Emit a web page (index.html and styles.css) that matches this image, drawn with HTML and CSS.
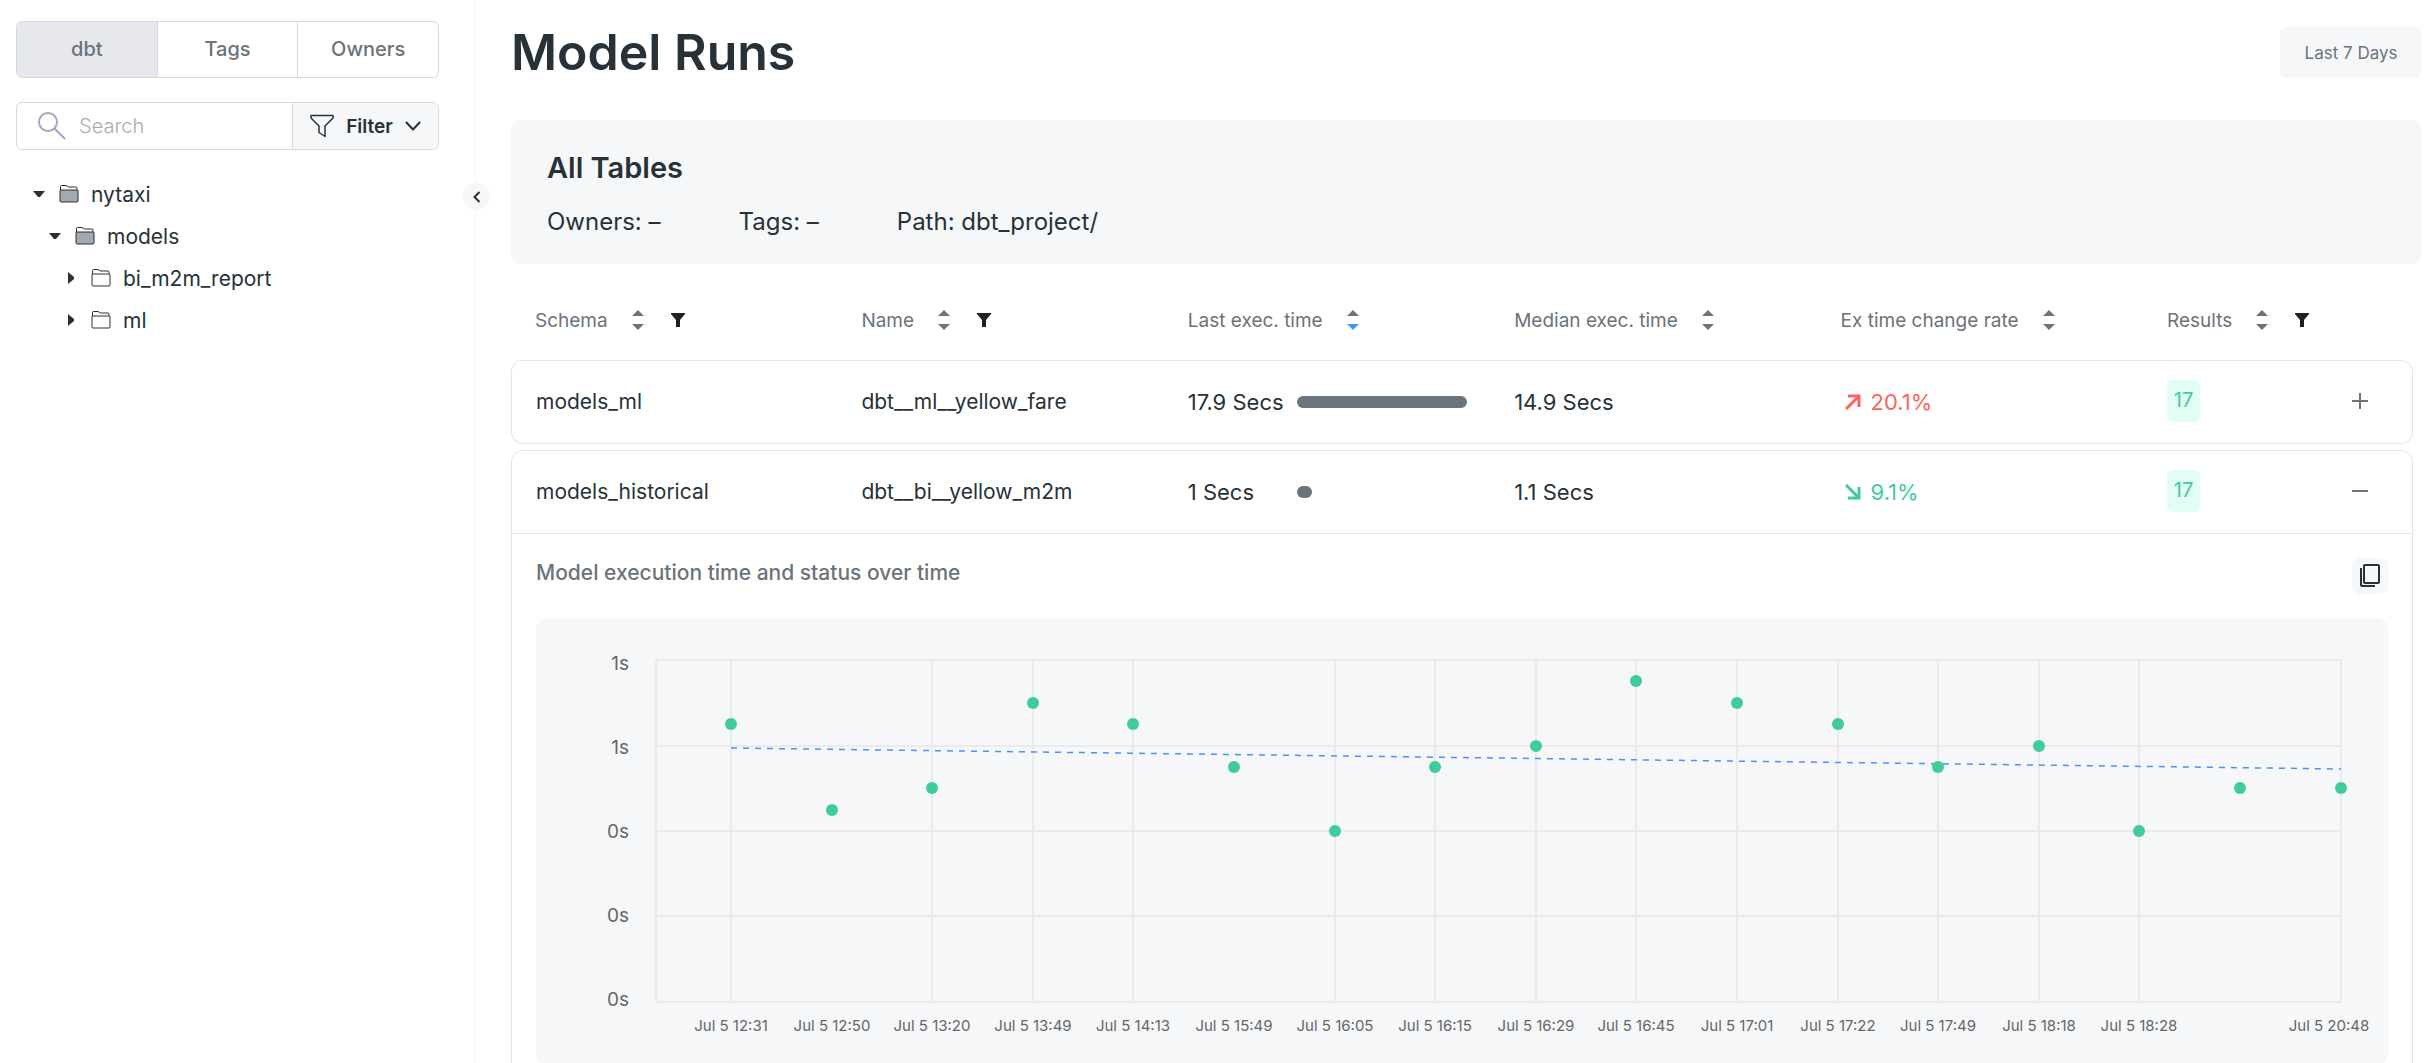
FILE: index.html
```html
<!DOCTYPE html>
<html lang="en">
<head>
<meta charset="utf-8">
<meta name="viewport" content="width=device-width, initial-scale=1">
<title>Model Runs</title>
<link rel="stylesheet" href="styles.css">
</head>
<body>
<svg class="sprite" aria-hidden="true">
  <symbol id="sort-up" viewBox="0 0 12 6"><path d="M6 0 12 6H0Z"/></symbol>
  <symbol id="sort-down" viewBox="0 0 12 6"><path d="M0 0H12L6 6Z"/></symbol>
  <symbol id="funnel" viewBox="0 0 14 14"><path d="M0 0H14V1L9 7V14H5V7L0 1Z"/></symbol>
  <symbol id="folder" viewBox="0 0 20 20"><path class="folder-tab" d="M1.500 7V2.500Q1.500 1.500 2.500 1.500H7L9.500 3H17Q18 3 18 4V6"/><rect class="folder-body" x="1" y="6" width="18" height="12" rx="1"/></symbol>
  <symbol id="caret-down" viewBox="0 0 12 12"><path d="M0 3H12L7 9H5Z"/></symbol>
  <symbol id="caret-right" viewBox="0 0 12 12"><path d="M3 0 9 5V7L3 12Z"/></symbol>
  <symbol id="arrow" viewBox="0 0 16 16"><path d="M1 15 14 2M3 2H14V13" fill="none" stroke="currentColor" stroke-width="3"/></symbol>
</svg>
<div class="app">
  <aside class="sidebar">
    <div class="tabs">
      <button class="tab active" type="button">dbt</button>
      <button class="tab" type="button">Tags</button>
      <button class="tab" type="button">Owners</button>
    </div>
    <div class="search">
      <label class="search-box">
        <svg class="search-icon" viewBox="0 0 28 28" aria-hidden="true"><circle cx="10" cy="10" r="9"/><path d="M16.500 16.500 27 27"/></svg>
        <input type="search" placeholder="Search" aria-label="Search">
      </label>
      <button class="filter" type="button">
        <svg class="filter-icon" viewBox="0 0 24 24" aria-hidden="true"><path d="M1 1.500H23V4L15 12V22.500L9 18.500V12L1 4Z"/></svg>
        Filter
        <svg class="chevron" viewBox="0 0 16 10" aria-hidden="true"><path d="M1 1 8 8.500 15 1"/></svg>
      </button>
    </div>
    <ul class="tree">
      <li><a class="node" href="#nytaxi"><svg class="caret"><use href="#caret-down"/></svg><svg class="folder open"><use href="#folder"/></svg>nytaxi</a>
        <ul>
          <li><a class="node" href="#models"><svg class="caret"><use href="#caret-down"/></svg><svg class="folder open"><use href="#folder"/></svg>models</a>
            <ul>
              <li><a class="node" href="#report"><svg class="caret"><use href="#caret-right"/></svg><svg class="folder"><use href="#folder"/></svg>bi_m2m_report</a></li>
              <li><a class="node" href="#ml"><svg class="caret"><use href="#caret-right"/></svg><svg class="folder"><use href="#folder"/></svg>ml</a></li>
            </ul>
          </li>
        </ul>
      </li>
    </ul>
    <button class="collapse" type="button" aria-label="Collapse sidebar"><svg viewBox="0 0 8 12"><path d="M6.500 1 1.500 6 6.500 11"/></svg></button>
  </aside>

  <main class="main">
    <header class="header">
      <h1>Model Runs</h1>
      <button class="range" type="button">Last 7 Days</button>
    </header>
    <section class="summary">
      <h2>All Tables</h2>
      <div class="facts"><span>Owners: –</span><span>Tags: –</span><span>Path: dbt_project/</span></div>
    </section>

    <table class="runs">
      <colgroup><col><col><col><col><col><col class="col-results"><col class="col-toggle"></colgroup>
      <thead>
        <tr>
          <th><div class="th">Schema<span class="sort"><svg><use href="#sort-up"/></svg><svg><use href="#sort-down"/></svg></span><svg class="funnel"><use href="#funnel"/></svg></div></th>
          <th><div class="th">Name<span class="sort"><svg><use href="#sort-up"/></svg><svg><use href="#sort-down"/></svg></span><svg class="funnel"><use href="#funnel"/></svg></div></th>
          <th><div class="th">Last exec. time<span class="sort"><svg><use href="#sort-up"/></svg><svg class="sorted"><use href="#sort-down"/></svg></span></div></th>
          <th><div class="th">Median exec. time<span class="sort"><svg><use href="#sort-up"/></svg><svg><use href="#sort-down"/></svg></span></div></th>
          <th><div class="th">Ex time change rate<span class="sort"><svg><use href="#sort-up"/></svg><svg><use href="#sort-down"/></svg></span></div></th>
          <th><div class="th">Results<span class="sort"><svg><use href="#sort-up"/></svg><svg><use href="#sort-down"/></svg></span><svg class="funnel"><use href="#funnel"/></svg></div></th>
          <th></th>
        </tr>
      </thead>
      <tbody>
        <tr class="run">
          <td>models_ml</td>
          <td>dbt__ml__yellow_fare</td>
          <td class="num"><div class="timing"><span class="time">17.9 Secs</span><span class="track"><span class="bar" style="width:100%"></span></span></div></td>
          <td class="num">14.9 Secs</td>
          <td class="num"><div class="rate up"><svg><use href="#arrow"/></svg>20.1%</div></td>
          <td><span class="badge">17</span></td>
          <td class="toggle-cell"><button class="toggle" type="button" aria-label="Expand"><svg viewBox="0 0 18 18"><path d="M1 9H17M9 1V17"/></svg></button></td>
        </tr>
      </tbody>
      <tbody>
        <tr class="run expanded">
          <td>models_historical</td>
          <td>dbt__bi__yellow_m2m</td>
          <td class="num"><div class="timing"><span class="time">1 Secs</span><span class="track"><span class="bar" style="width:9%"></span></span></div></td>
          <td class="num">1.1 Secs</td>
          <td class="num"><div class="rate down"><svg><use href="#arrow"/></svg>9.1%</div></td>
          <td><span class="badge">17</span></td>
          <td class="toggle-cell"><button class="toggle" type="button" aria-label="Collapse"><svg viewBox="0 0 18 18"><path d="M1 9H17"/></svg></button></td>
        </tr>
        <tr>
          <td class="details" colspan="7">
            <div class="details-head">
              <h3>Model execution time and status over time</h3>
              <button class="copy" type="button" aria-label="Copy"><svg viewBox="0 0 20 24"><rect x="4" y="1" width="15" height="18" rx="1"/><path d="M1 4V21Q1 22 2 22H15"/></svg></button>
            </div>
            <svg class="chart" viewBox="0 0 1852 448" role="img" aria-label="Execution time per run">
              <path class="grid" d="M120 42H1805M120 128H1805M120 213H1805M120 298H1805M120 384H1805M120 42V384M195 42V384M396 42V384M497 42V384M597 42V384M799 42V384M899 42V384M1000 42V384M1100 42V384M1201 42V384M1302 42V384M1402 42V384M1503 42V384M1603 42V384M1805 42V384"/>
              <g class="y-axis"><text x="93" y="52">1s</text><text x="93" y="136">1s</text><text x="93" y="220">0s</text><text x="93" y="304">0s</text><text x="93" y="388">0s</text></g>
              <path class="trend" d="M195 130 1805 151"/>
              <g class="points">
                <circle cx="195" cy="106" r="6"/><circle cx="296" cy="192" r="6"/><circle cx="396" cy="170" r="6"/><circle cx="497" cy="85" r="6"/><circle cx="597" cy="106" r="6"/><circle cx="698" cy="149" r="6"/><circle cx="799" cy="213" r="6"/><circle cx="899" cy="149" r="6"/><circle cx="1000" cy="128" r="6"/><circle cx="1100" cy="63" r="6"/><circle cx="1201" cy="85" r="6"/><circle cx="1302" cy="106" r="6"/><circle cx="1402" cy="149" r="6"/><circle cx="1503" cy="128" r="6"/><circle cx="1603" cy="213" r="6"/><circle cx="1704" cy="170" r="6"/><circle cx="1805" cy="170" r="6"/>
              </g>
              <g class="x-axis">
                <text x="195" y="413">Jul 5 12:31</text><text x="296" y="413">Jul 5 12:50</text><text x="396" y="413">Jul 5 13:20</text><text x="497" y="413">Jul 5 13:49</text><text x="597" y="413">Jul 5 14:13</text><text x="698" y="413">Jul 5 15:49</text><text x="799" y="413">Jul 5 16:05</text><text x="899" y="413">Jul 5 16:15</text><text x="1000" y="413">Jul 5 16:29</text><text x="1100" y="413">Jul 5 16:45</text><text x="1201" y="413">Jul 5 17:01</text><text x="1302" y="413">Jul 5 17:22</text><text x="1402" y="413">Jul 5 17:49</text><text x="1503" y="413">Jul 5 18:18</text><text x="1603" y="413">Jul 5 18:28</text><text x="1793" y="413">Jul 5 20:48</text>
              </g>
            </svg>
          </td>
        </tr>
      </tbody>
    </table>
  </main>
</div>
</body>
</html>
```
FILE: styles.css
```css
:root {
  --ink: #263238;
  --muted: #6b737b;
  --line: #e4e6eb;
  --control-line: #d3dae6;
  --panel: #f5f7f9;
  --green: #40cc9a;
  --red: #ff6459;
  --blue: #4c90ff;
}

* { box-sizing: border-box; }

body {
  margin: 0;
  background: #fff;
  color: var(--ink);
  font-family: "Inter", sans-serif;
  font-size: 21px;
}

button, input { font: inherit; color: inherit; }
button { padding: 0; border: 0; background: none; cursor: pointer; }
h1, h2, h3, ul { margin: 0; padding: 0; }

.sprite { display: none; }

.app { display: flex; height: 100vh; overflow: hidden; }

/* Sidebar */
.sidebar {
  position: relative;
  flex: none;
  width: 476px;
  padding: 21px 36px 0 16px;
  border-right: 1px solid #f2f3f4;
}

.tabs {
  display: flex;
  height: 57px;
  border: 1px solid var(--control-line);
  border-radius: 6px;
  overflow: hidden;
}
.tab { flex: 1; padding-bottom: 2px; color: var(--muted); font-size: 20px; font-weight: 500; }
.tab + .tab { border-left: 1px solid var(--control-line); }
.tab.active { background: #e6e8ec; }

.search {
  display: flex;
  height: 48px;
  margin-top: 24px;
  border: 1px solid var(--control-line);
  border-radius: 6px;
  overflow: hidden;
}
.search-box { display: flex; flex: 1; align-items: center; gap: 13px; min-width: 0; padding-left: 21px; }
.search-icon { flex: none; width: 28px; height: 28px; fill: none; stroke: #a0a4c4; stroke-width: 2; }
.search-box input { flex: 1; min-width: 0; padding: 0; border: 0; outline: 0; background: none; font-size: 20px; }
.search-box input::placeholder { color: #aaadb0; font-weight: 300; opacity: 1; }
.filter {
  display: flex;
  flex: none;
  align-items: center;
  justify-content: center;
  gap: 12px;
  width: 146px;
  border-left: 1px solid var(--control-line);
  background: var(--panel);
  font-size: 19px;
  font-weight: 600;
}
.filter-icon { width: 24px; height: 24px; }
.chevron { width: 16px; height: 10px; }
.filter-icon, .chevron { flex: none; fill: none; stroke: var(--ink); stroke-width: 2; stroke-linejoin: round; }
.filter-icon { stroke-width: 1.5; }

.tree { margin-top: 23px; padding-left: 17px; }
.tree ul { padding-left: 16px; }
.tree li { list-style: none; }
.node {
  display: flex;
  align-items: center;
  height: 42px;
  color: inherit;
  text-decoration: none;
}
.caret { width: 12px; height: 12px; margin-right: 14px; fill: var(--ink); }
.folder { width: 20px; height: 20px; margin-right: 12px; fill: #fff; stroke: var(--ink); stroke-width: 1; }
.folder.open { fill: #a2a9b0; }
.folder-tab { fill: #fff; }

.collapse {
  position: absolute;
  top: 183px;
  right: -15px;
  display: grid;
  place-items: center;
  width: 27px;
  height: 27px;
  border-radius: 50%;
  background: #f7f7f7;
}
.collapse svg { width: 8px; height: 12px; fill: none; stroke: var(--ink); stroke-width: 2; }

/* Main column */
.main { flex: 1; min-width: 0; padding: 21px 6px 0 35px; overflow: hidden; }

.header { display: flex; align-items: center; justify-content: space-between; height: 63px; }
h1 { padding-bottom: 2px; font-size: 50px; font-weight: 600; line-height: 60px; }
.range {
  width: 142px;
  height: 51px;
  border-radius: 6px;
  background: var(--panel);
  color: var(--muted);
  font-size: 17px;
}

.summary {
  margin-top: 36px;
  padding: 30px 36px 24px;
  border-radius: 10px;
  background: var(--panel);
}
h2 { font-size: 29px; font-weight: 600; line-height: 36px; }
.facts { display: flex; gap: 78px; margin-top: 18px; font-size: 24px; line-height: 36px; }

/* Runs table */
.runs {
  width: calc(100% - 9px);
  margin-top: 16px;
  border-collapse: separate;
  border-spacing: 0;
  table-layout: fixed;
}
.col-results { width: 198px; }
.col-toggle { width: 72px; }
.runs th, .runs td { padding: 0 0 0 24px; text-align: left; font-weight: 400; white-space: nowrap; }
.th { display: flex; align-items: center; height: 80px; color: var(--muted); font-size: 19px; }
.sort { display: flex; flex-direction: column; gap: 8px; margin-left: 24px; }
.sort svg { width: 12px; height: 6px; fill: var(--muted); }
.sort .sorted { fill: var(--blue); }
.funnel { width: 14px; height: 14px; margin-left: 27px; fill: #212121; }

.runs tbody + tbody::before { content: ""; display: block; height: 6px; }
.runs .run td { height: 84px; padding-bottom: 2px; border: solid var(--line); border-width: 1px 0; }
.runs .run td:first-child { border-left-width: 1px; border-radius: 12px 0 0 12px; }
.runs .run td:last-child { border-right-width: 1px; border-radius: 0 12px 12px 0; }
.runs .expanded td:first-child { border-radius: 12px 0 0 0; }
.runs .expanded td:last-child { border-radius: 0 12px 0 0; }
.runs .run .num { padding-bottom: 0; font-size: 22px; }

.timing { display: flex; align-items: center; }
.time { width: 109px; }
.track { width: 170px; }
.bar { display: block; height: 12px; border-radius: 6px; background: #6b747c; }

.rate { display: flex; align-items: center; gap: 10px; padding-left: 4px; }
.rate svg { width: 16px; height: 16px; }
.rate.up { color: var(--red); }
.rate.down { color: var(--green); }
.rate.down svg { transform: rotate(90deg); }

.badge {
  display: inline-block;
  width: 33px;
  height: 42px;
  border-radius: 6px;
  background: #e1fdf4;
  color: var(--green);
  font-size: 20px;
  line-height: 40px;
  text-align: center;
  vertical-align: middle;
}

.runs .toggle-cell { padding-left: 10px; }
.toggle { display: block; width: 18px; height: 18px; }
.toggle svg { display: block; stroke: var(--muted); stroke-width: 2; }

.runs .details { padding: 24px; border: 1px solid var(--line); border-top: 0; border-radius: 0 0 12px 12px; }
.details-head { display: flex; align-items: flex-start; justify-content: space-between; margin-bottom: 24px; }
h3 { color: var(--muted); font-size: 21px; font-weight: 500; line-height: 30px; }
.copy { display: grid; place-items: center; width: 36px; height: 36px; border-radius: 8px; background: var(--panel); }
.copy svg { width: 20px; height: 24px; fill: none; stroke: var(--ink); stroke-width: 2; }

.chart { display: block; width: 100%; border-radius: 12px; background: var(--panel); }
.grid { fill: none; stroke: #e8eaec; stroke-width: 2; }
.trend { fill: none; stroke: var(--blue); stroke-width: 1.5; stroke-dasharray: 6 6; }
.points { fill: var(--green); }
.y-axis, .x-axis { fill: #666; }
.y-axis { font-size: 19px; text-anchor: end; }
.x-axis { font-size: 15px; text-anchor: middle; }
```
